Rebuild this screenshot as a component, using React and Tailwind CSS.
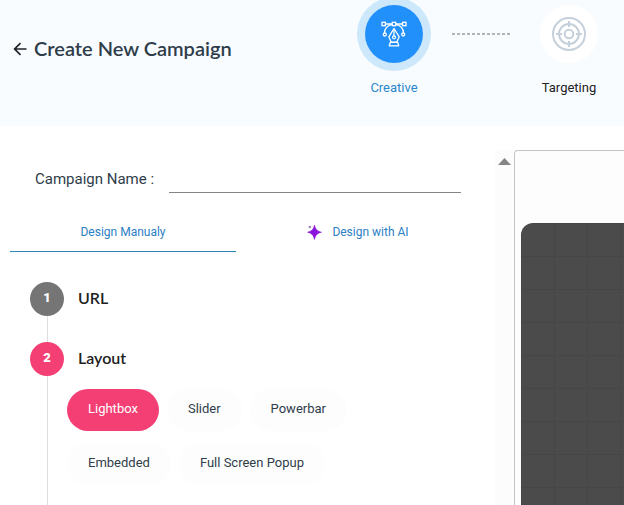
import React from "react";

const layouts = ["Lightbox", "Slider", "Powerbar", "Embedded", "Full Screen Popup"];

function BackArrow() {
  return (
    <svg width="14" height="14" viewBox="0 0 14 14" fill="none" stroke="#1d2329" strokeWidth="1.7">
      <path d="M13.5 7H1.5M7.500 1.200L1.600 7l5.900 5.800" />
    </svg>
  );
}

function PenToolIcon() {
  return (
    <svg width="26" height="26" viewBox="0 0 26 26" fill="none" stroke="#fff" strokeWidth="1.300">
      <path d="M4 3h7M15 3h7" />
      <rect x="1" y="1.300" width="3.400" height="3.400" />
      <rect x="21.600" y="1.300" width="3.400" height="3.400" />
      <rect x="11.300" y="1.300" width="3.400" height="3.400" />
      <path d="M11.300 3.400C6.500 4.500 3.600 8 3.500 12M14.700 3.400C19.500 4.500 22.400 8 22.500 12" />
      <circle cx="3.800" cy="13.500" r="1.500" />
      <circle cx="22.200" cy="13.500" r="1.500" />
      <path d="M13 7.500L7.800 15.800l2.400 5.400h5.600l2.400-5.400z" strokeLinejoin="round" />
      <path d="M13 8v7" />
      <circle cx="13" cy="16.300" r="1.500" />
      <path d="M9.300 21.400h7.400l1 3.400H8.300z" strokeLinejoin="round" />
    </svg>
  );
}

function TargetIcon() {
  return (
    <svg width="36" height="36" viewBox="0 0 36 36" fill="none" stroke="#c5d0db" strokeWidth="2">
      <circle cx="18" cy="18" r="16" />
      <circle cx="18" cy="18" r="10" />
      <circle cx="18" cy="18" r="4.300" />
      <path d="M18 5v6M18 25v6M5 18h6M25 18h6" />
    </svg>
  );
}

function Sparkle() {
  return (
    <svg width="16" height="16" viewBox="0 0 16 16">
      <path d="M8.500 1C9.700 5.500 11 6.900 15.500 8.200 11 9.500 9.700 11 8.500 15.500 7.300 11 6 9.500 1.500 8.200 6 6.900 7.300 5.500 8.500 1z" fill="#8a16dc" stroke="#8a16dc" strokeWidth="0.500" />
      <circle cx="3.800" cy="3" r="1.200" fill="#9b7ac0" />
    </svg>
  );
}

function StepTitle({ number, title, active }) {
  return (
    <div className="flex items-center gap-[14px]">
      <span
        className={
          "flex size-[34px] shrink-0 items-center justify-center rounded-full pb-0.5 text-[13px] font-black text-white " +
          (active ? "bg-[#f43f75]" : "bg-[#757575]")
        }
      >
        {number}
      </span>
      <h2 className="pb-0.5 font-['Lato','Liberation_Sans',sans-serif] text-base font-semibold text-[#222]">{title}</h2>
    </div>
  );
}

export default function App() {
  return (
    <div className="flex h-screen flex-col overflow-hidden bg-white font-['Roboto','Liberation_Sans',sans-serif] text-[#2f3d4a]">
      <header className="flex h-[126px] shrink-0 items-start bg-[#f8fcff] pt-[5px]">
        <div className="flex h-[88px] flex-1 items-center gap-[7px] pl-[13px]">
          <a href="#campaigns" aria-label="Back">
            <BackArrow />
          </a>
          <h1 className="whitespace-nowrap pb-0.5 font-['Lato','Liberation_Sans',sans-serif] text-xl font-semibold">Create New Campaign</h1>
        </div>
        <ol className="flex shrink-0 items-start pr-[15px] text-[13px] leading-5">
          <li className="flex w-20 flex-col items-center gap-[15px] text-[#2b87cc]">
            <span className="flex size-[58px] items-center justify-center rounded-full bg-[#2190fb] ring-[8px] ring-[#cde7fb]">
              <PenToolIcon />
            </span>
            Creative
          </li>
          <li
            aria-hidden="true"
            className="mx-[18px] mt-7 h-0.5 w-[59px] bg-[repeating-linear-gradient(to_right,#b2b5b8_0_3px,transparent_3px_5px)]"
          />
          <li className="flex w-20 flex-col items-center gap-[15px] text-[#222]">
            <span className="flex size-[58px] items-center justify-center rounded-full bg-white">
              <TargetIcon />
            </span>
            Targeting
          </li>
        </ol>
      </header>

      <main className="flex min-h-0 flex-1 pt-6">
        <section className="min-w-0 flex-1 px-[10px]">
          <div className="flex h-[43px] items-end gap-[15px] pl-[25px] pr-6">
            <label htmlFor="name" className="whitespace-nowrap pb-[3px] text-[15px]">
              Campaign Name :
            </label>
            <input id="name" type="text" className="h-8 min-w-0 flex-1 border-b border-[#858585] bg-transparent outline-none" />
          </div>
          <div role="tablist" className="flex text-xs text-[#2b80c4]">
            <button role="tab" aria-selected="true" className="h-[59px] w-[226px] border-b border-b-[#2d86b4] pt-5">
              Design Manualy
            </button>
            <button role="tab" aria-selected="false" className="flex h-[59px] flex-1 items-center justify-center gap-[10px] pt-[18px] pr-1.5">
              <Sparkle />
              Design with AI
            </button>
          </div>

          <div className="pl-5 pt-[30px]">
            <StepTitle number="1" title="URL" />
            <div className="ml-[17px] h-[26px] border-l border-[#dedede]" />
            <StepTitle number="2" title="Layout" active />
            <div className="ml-[17px] flex min-h-[130px] flex-wrap content-start gap-x-2 gap-y-3 border-l border-[#dedede] pl-[19px] pr-[60px] pt-[13px]">
              {layouts.map((name, i) => (
                <button
                  key={name}
                  className={
                    "h-[42px] rounded-full px-[21px] pb-0.5 text-[13px] " +
                    (i === 0 ? "bg-[#f43f75] text-white" : "bg-[#fdfdfd]")
                  }
                >
                  {name}
                </button>
              ))}
            </div>
          </div>
        </section>

        <div className="flex w-[19px] shrink-0 justify-center bg-[#fcfcfc] pt-2">
          <svg width="13" height="7" viewBox="0 0 13 7">
            <path d="M6.500 0L13 7H0z" fill="#858585" />
          </svg>
        </div>
        <section aria-label="Preview" className="flex w-[110px] shrink-0 flex-col rounded-tl-sm border-l border-t border-[#c4c4c4] bg-[#fdfdfd] pl-[6px] pt-[72px]">
          <div className="flex-1 rounded-tl-xl bg-[#4b4b4b] bg-[linear-gradient(to_left,#464646_1px,transparent_1px),linear-gradient(to_top,#464646_1px,transparent_1px)] bg-[size:33px_33px] bg-[position:1px_1px]" />
        </section>
      </main>
    </div>
  );
}
